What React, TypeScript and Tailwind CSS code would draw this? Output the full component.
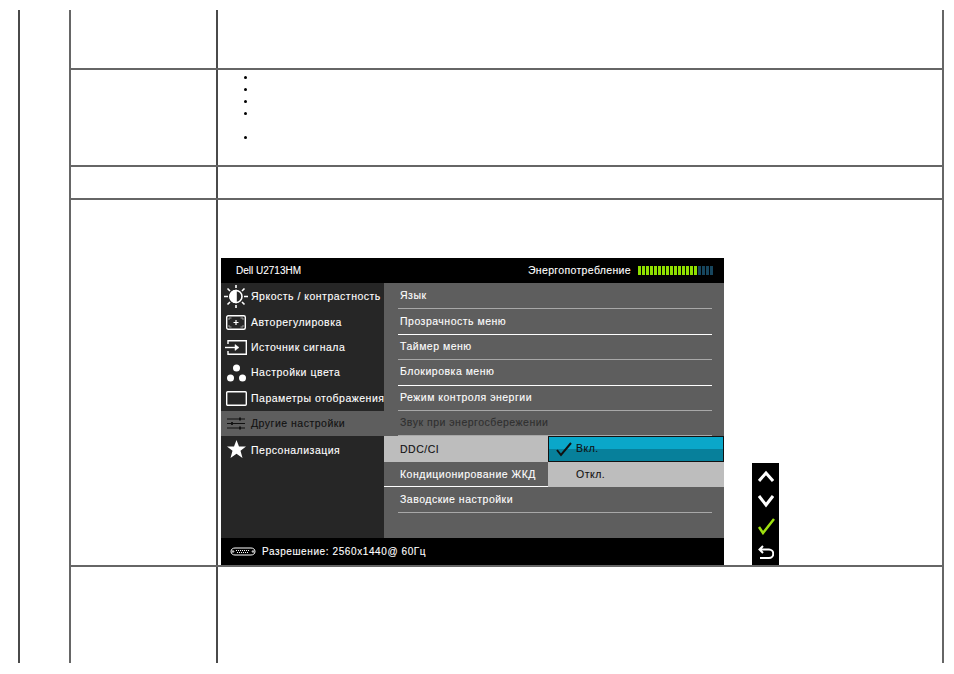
const osdFont = { fontFamily: '"Liberation Sans", Arial, sans-serif' };

function SunIcon() {
  return (
    <svg width="26" height="23" viewBox="0 0 26 23" fill="none" stroke="white" strokeWidth="1.6">
      <circle cx="13" cy="11.500" r="6" />
      <path d="M13 5.500a6 6 0 0 0 0 12z" fill="white" />
      <path d="M13 0v3M13 20v3M1 11.500h4M21 11.500h4M4.500 3.500l2.500 2.500M21.500 3.500L19 6M4.500 19.500L7 17M21.500 19.500L19 17" />
    </svg>
  );
}

function AutoIcon() {
  return (
    <svg width="20" height="15" viewBox="0 0 20 15" fill="none" stroke="white">
      <rect x="0.700" y="0.700" width="18.600" height="13.600" rx="1.500" strokeWidth="1.400" />
      <path d="M3 5V3h2.500M17 5V3h-2.500M3 10v2h2.500M17 10v2h-2.500" stroke="#999" />
      <path d="M10 5v5M7.500 7.500h5" strokeWidth="1.200" />
    </svg>
  );
}

function InputIcon() {
  return (
    <svg width="22" height="15" viewBox="0 0 22 15" fill="none" stroke="white" strokeWidth="1.400">
      <path d="M3 4V0.700h18.300v13.600H3V11" />
      <path d="M0 7.500h12" />
      <path d="M10 4.500l4 3-4 3z" fill="white" strokeWidth="0.500" />
    </svg>
  );
}

function DotsIcon() {
  return (
    <svg width="19" height="18" viewBox="0 0 19 18" fill="white">
      <circle cx="9.500" cy="4" r="3.500" />
      <circle cx="3.500" cy="14" r="3.500" />
      <circle cx="15.500" cy="14" r="3.500" />
    </svg>
  );
}

function RectIcon() {
  return (
    <svg width="21" height="15" viewBox="0 0 21 15" fill="none" stroke="white" strokeWidth="1.400">
      <rect x="0.700" y="0.700" width="19.600" height="13.600" rx="1" />
    </svg>
  );
}

function SlidersIcon() {
  return (
    <svg width="18" height="13" viewBox="0 0 18 13" fill="none" stroke="#111" strokeWidth="1.200">
      <path d="M0 2h18M0 6.500h18M0 11h18" />
      <path d="M13 0.500v3M5 5v3M13 9.500v3" strokeWidth="1.800" />
    </svg>
  );
}

function StarIcon() {
  return (
    <svg width="19" height="20" viewBox="0 0 19 18" fill="white">
      <path d="M9.500 0l2.500 6.500h7l-5.500 4.300 2 7.200-6-4.200-6 4.200 2-7.200L0 6.500h7z" />
    </svg>
  );
}

function VgaIcon() {
  return (
    <svg width="26" height="9" viewBox="0 0 26 9" fill="none" stroke="white">
      <path d="M1 4.500C1 2 3 1 5 1h16c2 0 4 1 4 3.500S23 8 21 8H5C3 8 1 7 1 4.500z" />
      <path d="M6 3.500h13M7 5.500h11" strokeDasharray="1 1" />
      <circle cx="3" cy="4.500" r="0.800" />
      <circle cx="23" cy="4.500" r="0.800" />
    </svg>
  );
}

const leftItems = [
  { label: "Яркость / контрастность", icon: <SunIcon /> },
  { label: "Авторегулировка", icon: <AutoIcon /> },
  { label: "Источник сигнала", icon: <InputIcon /> },
  { label: "Настройки цвета", icon: <DotsIcon /> },
  { label: "Параметры отображения", icon: <RectIcon /> },
];

function LeftRow({ label, icon, active, low }: { label: string; icon: React.ReactNode; active?: boolean; low?: boolean }) {
  return (
    <div className={active ? "flex h-[25.400px] items-center bg-[#5e5e5e] text-[#111]" : "flex h-[25.400px] items-center text-white"}>
      <div className="flex w-[30px] shrink-0 justify-center">{icon}</div>
      <span className={low ? "whitespace-nowrap pt-[3px]" : "whitespace-nowrap pt-[1px]"}>{label}</span>
    </div>
  );
}

function MenuRow({ label, dim, bright }: { label: string; dim?: boolean; bright?: boolean }) {
  return (
    <div
      className={`ml-[14px] mr-[12px] flex h-[25.400px] items-center border-b px-[2px] ${bright ? "border-white" : "border-[#a8a8a8]"} ${dim ? "text-[#2f2f2f]" : "text-white"}`}
    >
      {label}
    </div>
  );
}

function PowerBars() {
  const bars = Array.from({ length: 19 }, (_, i) => i);
  return (
    <div className="flex gap-[1px]">
      {bars.map((i) => (
        <div key={i} className={i < 15 ? "h-[9px] w-[3px] bg-[#8fe000]" : "h-[9px] w-[3px] bg-[#17465e]"} />
      ))}
    </div>
  );
}

function Osd() {
  return (
    <div className="flex h-[307px] w-[503px] flex-col text-[10.500px] tracking-[0.5px] [-webkit-text-stroke:0.1px]" style={osdFont}>
      <div className="flex h-[25px] shrink-0 items-center justify-between bg-black pl-[15px] pr-[11px] text-white">
        <span className="text-[10px] tracking-normal">Dell U2713HM</span>
        <div className="flex items-center gap-[7px]">
          <span className="tracking-[0.35px]">Энергопотребление</span>
          <PowerBars />
        </div>
      </div>
      <div className="flex flex-1">
        <div className="w-[163px] shrink-0 bg-[#262626] pt-[1px]">
          {leftItems.map((item) => (
            <LeftRow key={item.label} label={item.label} icon={item.icon} />
          ))}
          <LeftRow label="Другие настройки" icon={<SlidersIcon />} active />
          <LeftRow label="Персонализация" icon={<StarIcon />} low />
        </div>
        <div className="flex-1 bg-[#5e5e5e] pt-[1px]">
          <MenuRow label="Язык" />
          <MenuRow label="Прозрачность меню" bright />
          <MenuRow label="Таймер меню" />
          <MenuRow label="Блокировка меню" bright />
          <MenuRow label="Режим контроля энергии" />
          <MenuRow label="Звук при энергосбережении" dim />
          <div className="flex h-[25.500px]">
            <div className="flex w-[164px] items-center bg-[#bdbdbd] pl-[16px] pt-[1px] text-[#111]">DDC/CI</div>
            <div className="flex flex-1 items-center border border-[#111] bg-[linear-gradient(#0aa7c9_50%,#07809b_50%)] text-[#111]">
              <svg width="16" height="15" viewBox="0 0 16 15" fill="none" stroke="#111" strokeWidth="2" className="ml-[7px] mr-[4px]">
                <path d="M1 8l4 5L15 1" />
              </svg>
              Вкл.
            </div>
          </div>
          <div className="flex h-[25.500px]">
            <div className="flex w-[164px] items-center border-b border-white pl-[16px] pt-[1px] text-white">Кондиционирование ЖКД</div>
            <div className="flex flex-1 items-center bg-[#bdbdbd] pl-[28px] text-[#111]">Откл.</div>
          </div>
          <MenuRow label="Заводские настройки" />
        </div>
      </div>
      <div className="flex h-[27px] shrink-0 items-center gap-[6px] bg-black pl-[9px] text-[10px] tracking-[0.6px] text-white">
        <VgaIcon />
        <span>Разрешение: 2560x1440@ 60Гц</span>
      </div>
    </div>
  );
}

function SideButtons() {
  return (
    <div className="h-[102px] w-[27px] bg-black">
      <div className="flex h-[25.500px] items-center justify-center">
        <svg width="16" height="12" viewBox="0 0 16 12" fill="none" stroke="white" strokeWidth="3"><path d="M1 11l7-8 7 8" /></svg>
      </div>
      <div className="flex h-[25.500px] items-center justify-center">
        <svg width="16" height="13" viewBox="0 0 16 13" fill="none" stroke="white" strokeWidth="3"><path d="M1 1l7 9 7-9" /></svg>
      </div>
      <div className="flex h-[25.500px] items-center justify-center">
        <svg width="18" height="17" viewBox="0 0 18 17" fill="none" stroke="#9fe010" strokeWidth="2.500"><path d="M2 9l4 6L17 1" /></svg>
      </div>
      <div className="flex h-[25.500px] items-center justify-center">
        <svg width="16" height="15" viewBox="0 0 16 15" fill="none" stroke="white" strokeWidth="2"><path d="M5 1L1.500 4.500 5 8M2 4.500h9a3.800 3.800 0 0 1 0 8.500H2" /></svg>
      </div>
    </div>
  );
}

function Row({ height, children }: { height: string; children?: React.ReactNode }) {
  return (
    <div className={`flex border-b-2 border-[#666] ${height}`}>
      <div className="w-[147px] shrink-0 border-r-2 border-[#4a4a4a]" />
      <div className="min-w-0 flex-1">{children}</div>
    </div>
  );
}

export default function App() {
  return (
    <div className="h-[674px] w-[954px] overflow-hidden bg-white pl-[18px] pt-[10px]">
      <div className="flex h-[653px] w-[926px] border-l-2 border-[#4a4a4a]">
        <div className="w-[49px] shrink-0" />
        <div className="flex-1 border-l-2 border-r-2 border-[#666]">
          <Row height="h-[60px]" />
          <Row height="h-[97px]">
            <ul className="list-disc pl-[39px] pt-[1px] text-[9px] leading-[12px]">
              <li className="h-[12px]" />
              <li className="h-[12px]" />
              <li className="h-[12px]" />
              <li className="h-[24px]" />
              <li className="h-[12px]" />
            </ul>
          </Row>
          <Row height="h-[33px]" />
          <Row height="h-[367px]">
            <div className="flex items-end pl-[3px] pt-[58px]">
              <Osd />
              <div className="ml-[28px]">
                <SideButtons />
              </div>
            </div>
          </Row>
          <div className="flex h-[96px]">
            <div className="w-[147px] shrink-0 border-r-2 border-[#4a4a4a]" />
          </div>
        </div>
      </div>
    </div>
  );
}
